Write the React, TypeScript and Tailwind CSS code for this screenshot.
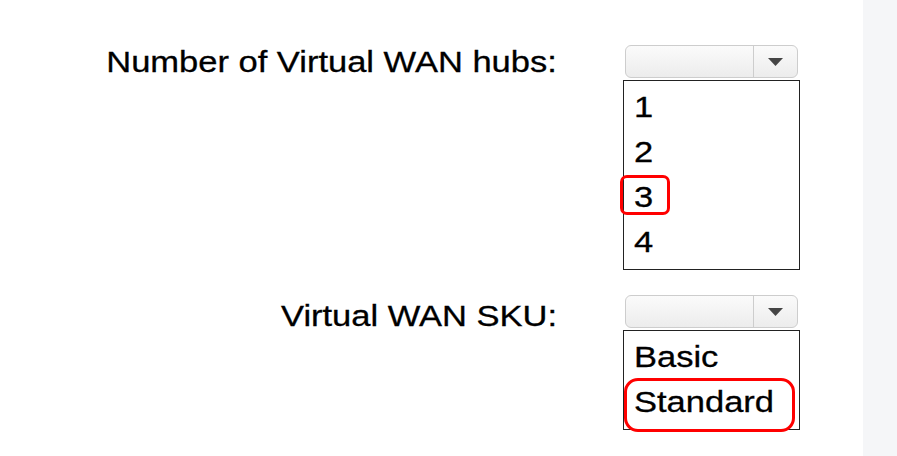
import React from "react";

type RowProps = {
  label: string;
  labelClass: string;
  options: string[];
  picked: number;
  ringClass: string;
  className?: string;
};

function FakeSelect() {
  return (
    <div className="ml-[2px] flex h-[33px] w-[173px] overflow-hidden rounded-[6px] border border-[#cdcdcd] bg-gradient-to-b from-[#fbfbfb] to-[#ececec]">
      <div className="flex-1" />
      <div className="flex w-[44px] items-center justify-center border-l border-[#cdcdcd]">
        <svg width="15" height="8" viewBox="0 0 15 8">
          <polygon points="0,0 15,0 7.5,8" fill="#454545" />
        </svg>
      </div>
    </div>
  );
}

function Row({ label, labelClass, options, picked, ringClass, className }: RowProps) {
  return (
    <div className={"flex items-start " + (className ?? "")}>
      <div className={"w-[557px] text-right leading-[34px] " + labelClass}>
        <span className="inline-block origin-right scale-x-115">{label}</span>
      </div>
      <div className="ml-[66px] w-[177px]">
        <FakeSelect />
        <ul className="mt-[2px] border border-[#222] bg-white pt-[3px] pb-[5px]">
          {options.map((opt, i) => (
            <li key={opt} className="relative pl-[10px] leading-[45px]">
              <span className="inline-block origin-left scale-x-115">{opt}</span>
              {i === picked && (
                <div className={"absolute border-[3px] border-[#f00] " + ringClass} />
              )}
            </li>
          ))}
        </ul>
      </div>
    </div>
  );
}

export default function App() {
  return (
    <div className="flex min-h-screen w-full bg-white">
      <div className="w-[863px] shrink-0 pt-[45px] font-['Liberation_Sans',Arial,sans-serif] text-[30px] text-black [-webkit-text-stroke:0.3px_#000]">
        <Row
          label="Number of Virtual WAN hubs:"
          labelClass="pt-0"
          options={["1", "2", "3", "4"]}
          picked={2}
          ringClass="left-[-4px] top-[1px] h-[40px] w-[50px] rounded-[7px]"
        />
        <Row
          className="mt-[25px]"
          label="Virtual WAN SKU:"
          labelClass="pt-[4px]"
          options={["Basic", "Standard"]}
          picked={1}
          ringClass="left-[0px] top-[-1px] h-[54px] w-[171px] rounded-[14px]"
        />
      </div>
      <div className="flex-1 bg-[#f5f6f8]" />
    </div>
  );
}
